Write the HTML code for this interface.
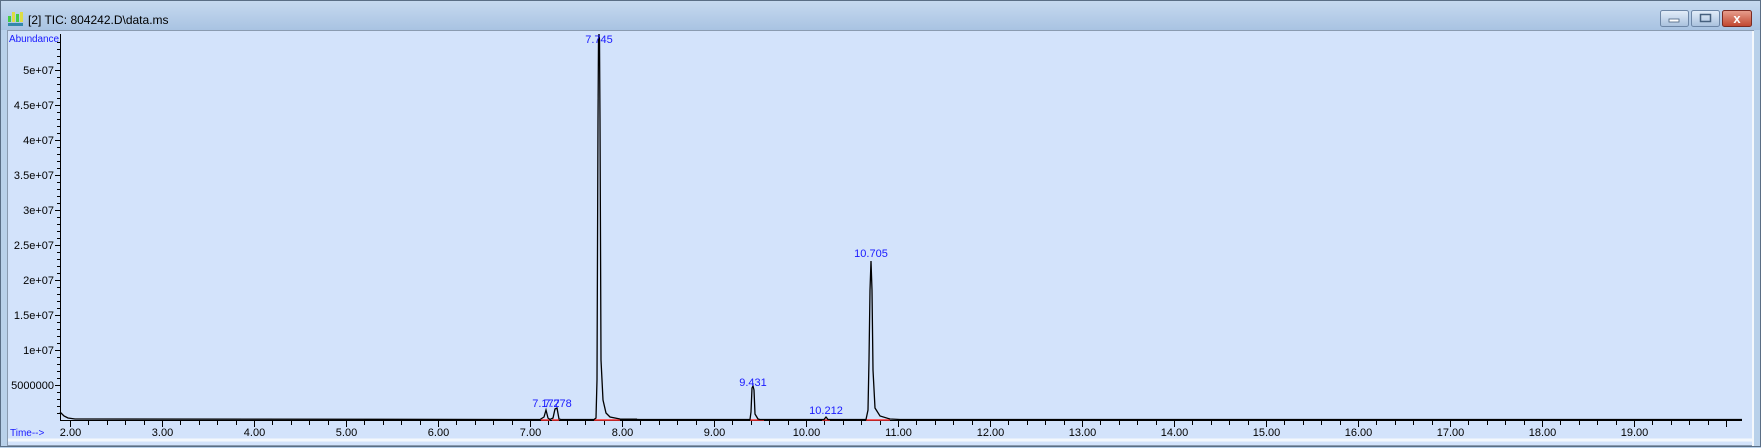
<!DOCTYPE html>
<html><head><style>
html,body{margin:0;padding:0;width:1761px;height:448px;overflow:hidden;background:#b9d1ea;}
</style></head><body>
<svg width="1761" height="448" xmlns="http://www.w3.org/2000/svg" font-family="Liberation Sans, sans-serif">
<defs>
<linearGradient id="tb" x1="0" y1="0" x2="0" y2="1"><stop offset="0" stop-color="#c7daf0"/><stop offset="1" stop-color="#a9c3e2"/></linearGradient>
<linearGradient id="bt" x1="0" y1="0" x2="0" y2="1"><stop offset="0" stop-color="#e4eefa"/><stop offset="1" stop-color="#a8c0dd"/></linearGradient>
<linearGradient id="cl" x1="0" y1="0" x2="0" y2="1"><stop offset="0" stop-color="#e8a08f"/><stop offset="1" stop-color="#c0452e"/></linearGradient>
</defs>
<rect x="0" y="0" width="1761" height="448" fill="#b9d1ea"/>
<rect x="0" y="0" width="1761" height="30" fill="url(#tb)"/>
<rect x="0.5" y="0.5" width="1760" height="446" fill="none" stroke="#5a6e85"/>
<g transform="translate(8,12)">
<rect x="0" y="4" width="3" height="6" fill="#4c4"/><rect x="4" y="0" width="3" height="10" fill="#dd4"/><rect x="8" y="2" width="3" height="8" fill="#4c4"/><rect x="12" y="0" width="3" height="10" fill="#dd4"/>
<rect x="0" y="11" width="15" height="3" fill="#38a"/>
</g>
<text x="28" y="24" font-size="12" fill="#000">[2] TIC: 804242.D\data.ms</text>
<rect x="1660.5" y="10.5" width="28" height="16" rx="2" fill="url(#bt)" stroke="#6d86a6"/>
<rect x="1669" y="19" width="10" height="3" fill="#fff" stroke="#46607e" stroke-width="0.8"/>
<rect x="1691.5" y="10.5" width="28" height="16" rx="2" fill="url(#bt)" stroke="#6d86a6"/>
<rect x="1700.5" y="14.5" width="10" height="7" fill="none" stroke="#46607e" stroke-width="1.5"/>
<rect x="1722.5" y="10.5" width="29" height="16" rx="2" fill="url(#cl)" stroke="#7a2a22"/>
<text x="1737" y="23" font-size="13" font-weight="bold" fill="#fff" text-anchor="middle">x</text>
<rect x="7.5" y="30.5" width="1746" height="415" fill="#d3e3fb" stroke="#8a9bb0"/>
<line x1="1753" y1="31" x2="1753" y2="446" stroke="#f4f8fc" stroke-width="2"/>
<line x1="8" y1="440" x2="1753" y2="440" stroke="#f4f8fc" stroke-width="3"/>
<text x="9" y="42" font-size="10" fill="#1a1aff" textLength="50">Abundance</text>
<text x="10" y="436" font-size="10" fill="#1a1aff">Time--&gt;</text>
<g stroke="#000" stroke-width="1" fill="none">
<line x1="60.5" y1="34" x2="60.5" y2="420.5"/>
<line x1="60" y1="420.5" x2="1742" y2="420.5"/>
<path d="M57 56.5h3M57 63.5h3M57 77.5h3M57 84.5h3M57 91.5h3M57 98.5h3M57 112.5h3M57 119.5h3M57 126.5h3M57 133.5h3M57 147.5h3M57 154.5h3M57 161.5h3M57 168.5h3M57 182.5h3M57 189.5h3M57 196.5h3M57 203.5h3M57 217.5h3M57 224.5h3M57 231.5h3M57 238.5h3M57 252.5h3M57 259.5h3M57 266.5h3M57 273.5h3M57 287.5h3M57 294.5h3M57 301.5h3M57 308.5h3M57 322.5h3M57 329.5h3M57 336.5h3M57 343.5h3M57 357.5h3M57 364.5h3M57 371.5h3M57 378.5h3M57 392.5h3M57 399.5h3M57 406.5h3M57 413.5h3M57 49.5h3M57 42.5h3"/>
<path d="M55 70.5h5M55 105.5h5M55 140.5h5M55 175.5h5M55 210.5h5M55 245.5h5M55 280.5h5M55 315.5h5M55 350.5h5M55 385.5h5"/>
</g>
<g id="xt" stroke="#000" stroke-width="1"></g>
<g font-size="11" fill="#000" text-anchor="end">
<text x="54" y="74">5e+07</text><text x="54" y="109">4.5e+07</text><text x="54" y="144">4e+07</text><text x="54" y="179">3.5e+07</text><text x="54" y="214">3e+07</text><text x="54" y="249">2.5e+07</text><text x="54" y="284">2e+07</text><text x="54" y="319">1.5e+07</text><text x="54" y="354">1e+07</text><text x="54" y="389">5000000</text>
</g>
<g id="xl" font-size="11" fill="#000" text-anchor="middle"></g>
<g stroke="#ff3030" stroke-width="1.5">
<line x1="541" y1="420" x2="550" y2="420"/><line x1="552" y1="420" x2="559" y2="420"/>
<line x1="594" y1="420" x2="620" y2="420"/>
<line x1="750" y1="420" x2="764" y2="420"/>
<line x1="822" y1="420" x2="830" y2="420"/>
<line x1="866" y1="420" x2="890" y2="420"/>
</g>
<polyline fill="none" stroke="#000" stroke-width="1.3" points="60,412 64,416 68,418 75,419 540,419.5 544,417 546,410 548,418 550,419.5 553,418 555,409 557,408 559,419 561,419.5 594,419.5 596,418 597,380 598,120 598.5,40 599,34 599.5,40 600,120 601,360 603,400 606,413 610,417 620,419 640,419.5 750,419.5 751,412 752,388 753,386 754,390 755,414 758,419 760,419.5 824,419.5 826,417 828,419.5 866,419.5 868,410 869,360 870,290 871,261 872,290 873,370 875,408 880,416 890,419 900,419.5 1742,419.5"/>
<line x1="620" y1="419.5" x2="637" y2="419.5" stroke="#000" stroke-width="2"/>
<g font-size="11" fill="#1a1aff" text-anchor="middle">
<text x="599" y="43">7.745</text>
<text x="871" y="257">10.705</text>
<text x="753" y="386">9.431</text>
<text x="826" y="414">10.212</text>
<text x="546" y="407">7.177</text>
<text x="558" y="407">7.278</text>
</g>
<script>
var xt=document.getElementById('xt'),xl=document.getElementById('xl'),ns='http://www.w3.org/2000/svg';
for(var i=0;i<=90;i++){var x=Math.round(70+i*18.4)+0.5;if(x>1742)break;var m=i%5==0;var l=document.createElementNS(ns,'line');l.setAttribute('x1',x);l.setAttribute('x2',x);l.setAttribute('y1',420);l.setAttribute('y2',m?427:425);xt.appendChild(l);
if(m&&i<90){var t=document.createElementNS(ns,'text');t.setAttribute('x',x);t.setAttribute('y',436);t.textContent=(2+i/5).toFixed(2);xl.appendChild(t);}}
</script>
</svg>
</body></html>
